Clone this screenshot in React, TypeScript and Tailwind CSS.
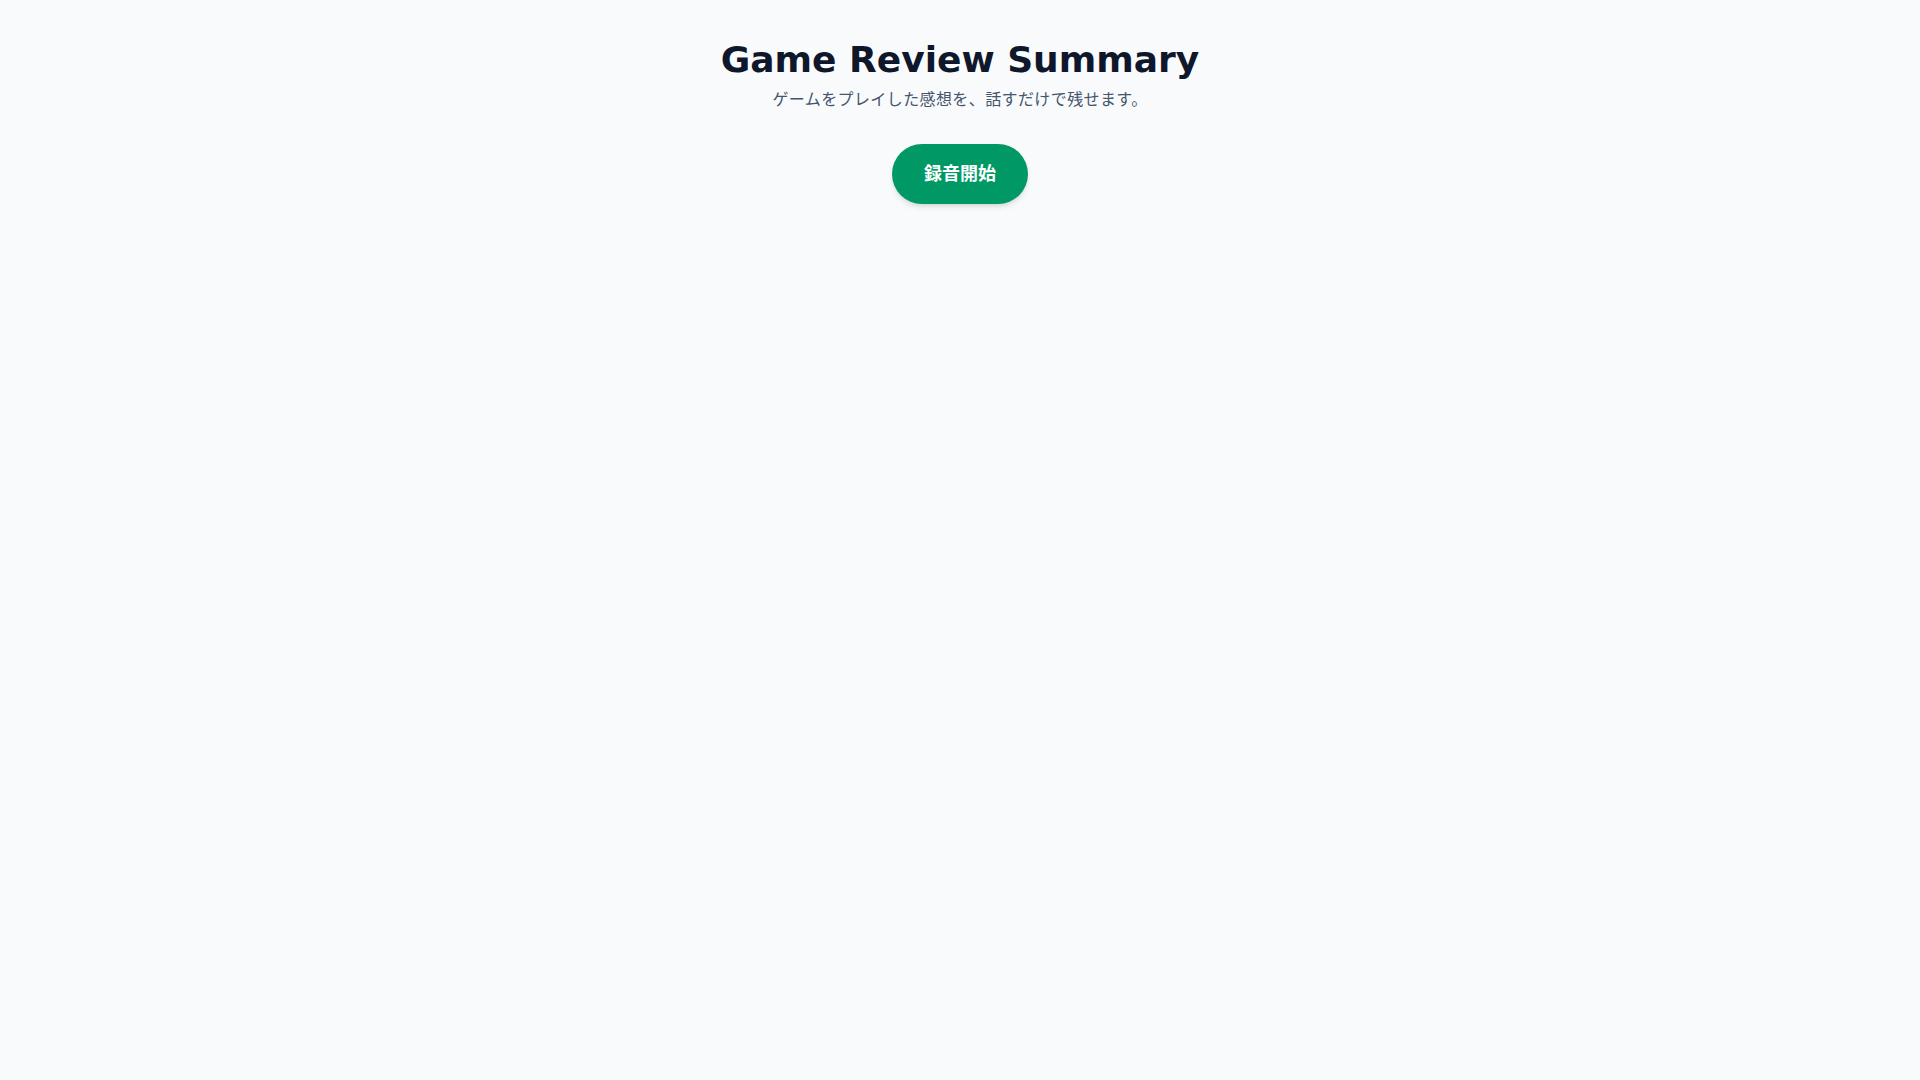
import React from 'react';

const fontStack = '"DejaVu Sans", "Noto Sans CJK JP", sans-serif';

export default function App() {
  return (
    <div className="min-h-screen bg-slate-50" style={{ fontFamily: fontStack }}>
      <main className="flex flex-col items-center pt-10">
        {/* Header */}
        <h1 className="text-4xl font-bold text-slate-900">Game Review Summary</h1>
        <p className="mt-2 text-base tracking-wide text-slate-600">
          ゲームをプレイした感想を、話すだけで残せます。
        </p>

        {/* Record button */}
        <button
          type="button"
          className="mt-8 rounded-full bg-emerald-600 px-8 py-4 text-lg font-bold text-white shadow-md hover:bg-emerald-700"
        >
          録音開始
        </button>
      </main>
    </div>
  );
}
